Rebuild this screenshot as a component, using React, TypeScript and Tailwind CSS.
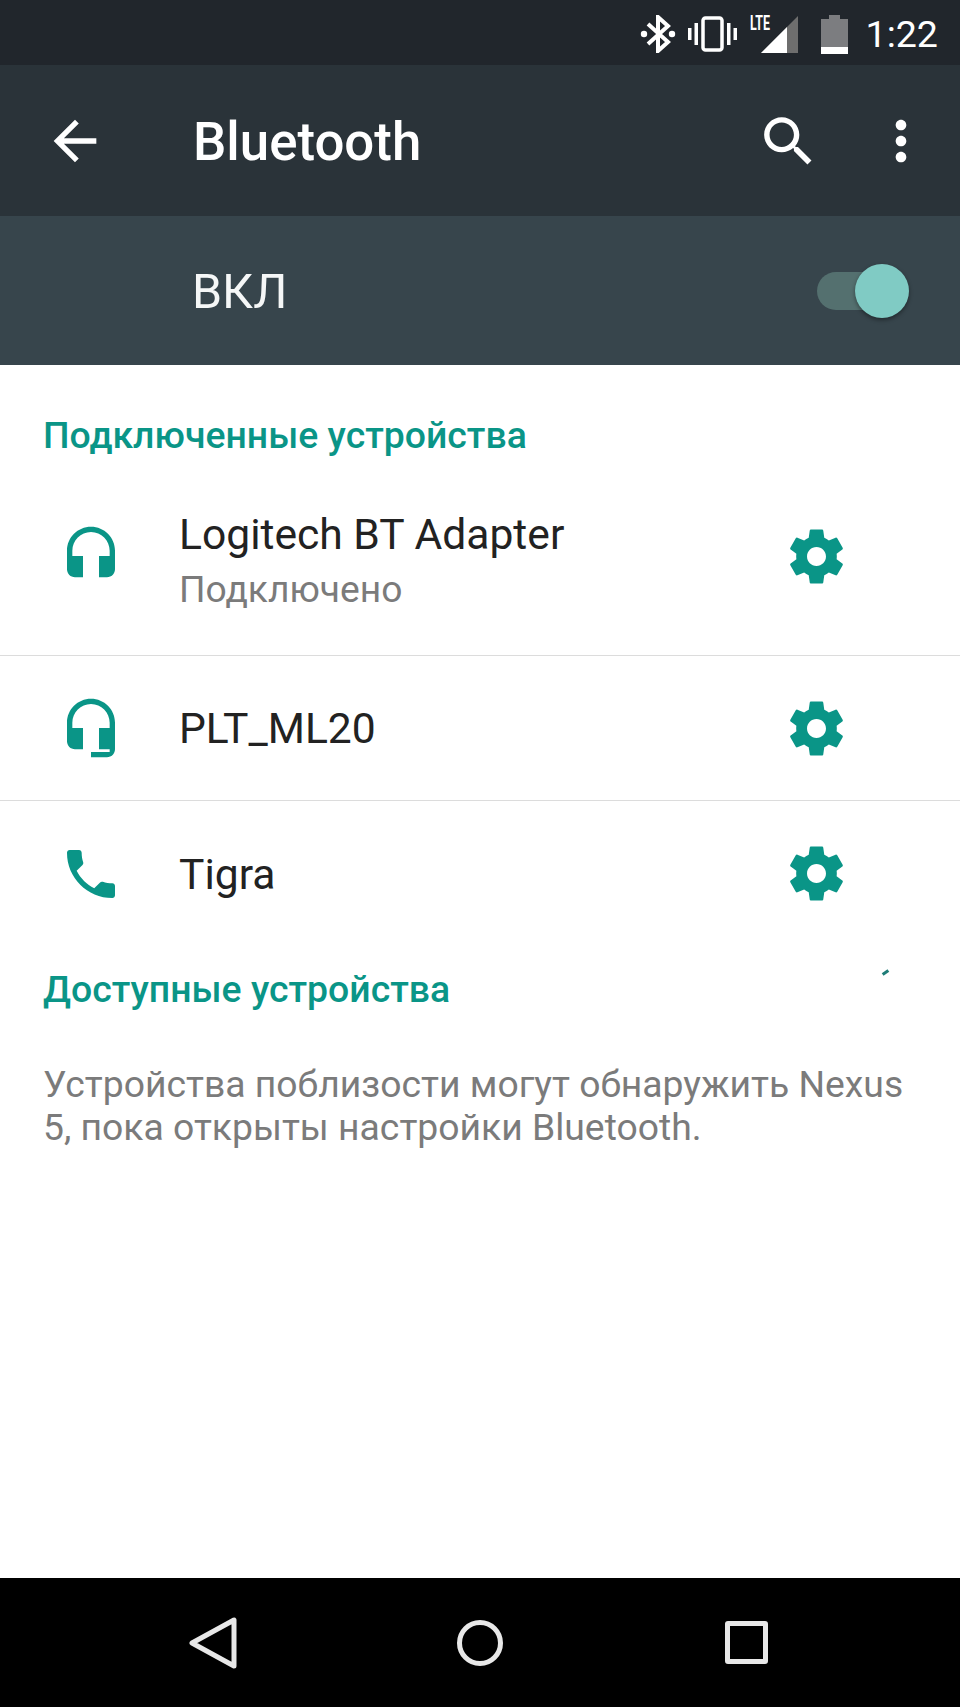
const HEADSET = "M12 1c-4.97 0-9 4.03-9 9v7c0 1.66 1.34 3 3 3h3v-8H5v-2c0-3.87 3.13-7 7-7s7 3.13 7 7v2h-4v8h3c1.66 0 3-1.34 3-3v-7c0-4.97-4.03-9-9-9z";
const HEADSET_MIC = "M12 1c-4.97 0-9 4.03-9 9v7c0 1.66 1.34 3 3 3h3v-8H5v-2c0-3.87 3.13-7 7-7s7 3.13 7 7v2h-4v8h4v1h-7v2h6c1.66 0 3-1.34 3-3V10c0-4.97-4.03-9-9-9z";
const PHONE = "M6.62 10.79c1.44 2.83 3.76 5.14 6.59 6.59l2.2-2.2c.27-.27.67-.36 1.02-.24 1.12.37 2.33.57 3.57.57.55 0 1 .45 1 1V20c0 .55-.45 1-1 1-9.39 0-17-7.61-17-17 0-.55.45-1 1-1h3.5c.55 0 1 .45 1 1 0 1.25.2 2.45.57 3.57.11.35.03.74-.25 1.02l-2.2 2.2z";
const GEAR = "M19.43 12.98c.04-.32.07-.64.07-.98s-.03-.66-.07-.98l2.11-1.65c.19-.15.24-.42.12-.64l-2-3.46c-.12-.22-.39-.3-.61-.22l-2.49 1c-.52-.4-1.08-.73-1.69-.98l-.38-2.65C14.46 2.18 14.25 2 14 2h-4c-.25 0-.46.18-.49.42l-.38 2.65c-.61.25-1.17.59-1.69.98l-2.49-1c-.23-.09-.49 0-.61.22l-2 3.46c-.13.22-.07.49.12.64l2.11 1.65c-.04.32-.07.65-.07.98s.03.66.07.98l-2.11 1.65c-.19.15-.24.42-.12.64l2 3.46c.12.22.39.3.61.22l2.49-1c.52.4 1.08.73 1.69.98l.38 2.65c.03.24.24.42.49.42h4c.25 0 .46-.18.49-.42l.38-2.65c.61-.25 1.17-.59 1.69-.98l2.49 1c.23.09.49 0 .61-.22l2-3.46c.12-.22.07-.49-.12-.64l-2.11-1.65zM12 15.5c-1.93 0-3.5-1.57-3.5-3.5s1.57-3.5 3.5-3.5 3.5 1.57 3.5 3.5-1.57 3.5-3.5 3.5z";

function Icon({ d, className }: { d: string; className: string }) {
  return (
    <svg viewBox="0 0 24 24" fill="currentColor" className={className}>
      <path d={d} />
    </svg>
  );
}

function Row({ icon, title, sub, divider, rowClass }: { icon: string; title: string; sub?: string; divider?: boolean; rowClass: string }) {
  return (
    <div className={`flex items-center pl-[59px] pr-[111px] ${rowClass} ${divider ? "border-b border-[#dcdcdc]" : ""}`}>
      <Icon d={icon} className="w-[64px] h-[64px] text-[#0a9587] shrink-0" />
      <div className={`ml-[56px] flex-1 min-w-0 ${sub ? "mt-[10px]" : ""}`}>
        <div className="text-[42.6px] leading-[50px] text-[#222222]">{title}</div>
        {sub && <div className="mt-[6px] text-[37.2px] leading-[48px] text-[#7b7b7b]">{sub}</div>}
      </div>
      <Icon d={GEAR} className="w-[65px] h-[65px] text-[#0a9587] shrink-0" />
    </div>
  );
}

export default function App() {
  return (
    <div className="w-[960px] h-[1707px] flex flex-col bg-white overflow-hidden font-['Roboto',sans-serif]">
      {/* status bar */}
      <div className="h-[65px] bg-[#21262c] flex items-center justify-end pr-[22px] text-white shrink-0">
        <svg viewBox="0 0 36 38" className="w-[36px] h-[38px] mb-[-3px]" fill="none" stroke="white">
          <path d="M8 9 L28 27 L18 36 V2 L28 11 L8 29" strokeWidth="4" />
          <circle cx="4" cy="19" r="3.2" fill="white" stroke="none" />
          <circle cx="32" cy="19" r="3.2" fill="white" stroke="none" />
        </svg>
        <svg viewBox="0 0 49 36" className="w-[49px] h-[36px] ml-[12px] mb-[-3px]" fill="white">
          <rect x="0" y="12" width="3.5" height="12" />
          <rect x="6.5" y="7" width="3.5" height="22" />
          <rect x="15" y="2" width="19" height="32" rx="2.5" fill="none" stroke="white" strokeWidth="3.5" />
          <rect x="39" y="7" width="3.5" height="22" />
          <rect x="45.5" y="12" width="3.5" height="12" />
        </svg>
        <div className="relative w-[49px] h-[38px] ml-[13px] mb-[-3px]">
          <svg viewBox="0 0 49 38" className="w-[49px] h-[38px]">
            <polygon points="11,38 48,1 48,38" fill="#6e6e6e" />
            <polygon points="11,38 37,12 37,38" fill="white" />
          </svg>
          <span className="absolute left-0 top-[-2px] text-[20px] leading-[20px] font-bold text-white font-['Roboto',sans-serif] scale-x-[0.62] origin-left">LTE</span>
        </div>
        <svg viewBox="0 0 27 39" className="w-[27px] h-[39px] ml-[22px] mb-[-3px]">
          <path d="M8 0 H19 V4 H27 V39 H0 V4 H8 Z" fill="#7c7d80" />
          <rect x="0" y="32" width="27" height="7" fill="white" />
        </svg>
        <span className="ml-[18px] text-[37.6px] leading-none mb-[-4px]">1:22</span>
      </div>

      {/* app bar */}
      <div className="h-[151px] bg-[#2a3339] flex items-center pl-[43px] pr-[27px] text-white shrink-0">
        <Icon d="M20 11H7.83l5.59-5.59L12 4l-8 8 8 8 1.41-1.41L7.83 13H20v-2z" className="w-[64px] h-[64px] shrink-0 mt-[1px]" />
        <div className="ml-[86px] flex-1 text-[52.8px] leading-none font-medium mt-[4px]">Bluetooth</div>
        <Icon d="M15.5 14h-.79l-.28-.27C15.41 12.59 16 11.11 16 9.5 16 5.91 13.09 3 9.5 3S3 5.91 3 9.5 5.91 16 9.5 16c1.61 0 3.09-.59 4.23-1.57l.27.28v.79l5 4.99L20.49 19l-4.99-5zm-6 0C7.01 14 5 11.99 5 9.5S7.01 5 9.5 5 14 7.01 14 9.5 11.99 14 9.5 14z" className="w-[65px] h-[65px] shrink-0 mt-[1px]" />
        <Icon d="M12 8c1.1 0 2-.9 2-2s-.9-2-2-2-2 .9-2 2 .9 2 2 2zm0 2c-1.1 0-2 .9-2 2s.9 2 2 2 2-.9 2-2-.9-2-2-2zm0 6c-1.1 0-2 .9-2 2s.9 2 2 2 2-.9 2-2-.9-2-2-2z" className="w-[64px] h-[64px] shrink-0 ml-[48px] mt-[1px]" />
      </div>

      {/* switch row */}
      <div className="h-[149px] bg-[#37454c] flex items-center pl-[192px] pr-[56px] shrink-0">
        <div className="flex-1 text-[48.3px] leading-none text-[#f5f7f7] mt-[4px]">ВКЛ</div>
        <div className="relative w-[90px] h-[38px] rounded-full bg-[#54706f] mr-[-3px]">
          <div className="absolute right-[-2px] top-[-8px] w-[54px] h-[54px] rounded-full bg-[#80cbc4] shadow-[0_2px_4px_rgba(0,0,0,0.4)]" />
        </div>
      </div>

      {/* content */}
      <div className="flex-1 bg-white flex flex-col min-h-0">
        <div className="h-[96px] pl-[43px] pt-[47px] text-[37.4px] leading-[46px] font-medium text-[#0a9587]">Подключенные устройства</div>
        <Row icon={HEADSET} title="Logitech BT Adapter" sub="Подключено" divider rowClass="h-[195px] pb-[4px]" />
        <Row icon={HEADSET_MIC} title="PLT_ML20" divider rowClass="h-[145px]" />
        <Row icon={PHONE} title="Tigra" rowClass="h-[145px]" />
        <div className="relative h-[90px] pl-[43px] pt-[20px] text-[37.4px] leading-[46px] font-medium text-[#0a9587]">
          Доступные устройства
          <div className="absolute left-[882px] top-[25px] w-[7px] h-[3px] bg-[#1f7d78] rotate-[-35deg]" />
        </div>
        <div className="pl-[43px] pr-[40px] pt-[27px] text-[37.3px] leading-[43px] text-[#7b7b7b]">
          Устройства поблизости могут обнаружить Nexus 5, пока открыты настройки Bluetooth.
        </div>
      </div>

      {/* nav bar */}
      <div className="h-[129px] bg-black flex items-center justify-center shrink-0">
        <div className="w-[267px] flex justify-center">
          <svg viewBox="0 0 50 52" className="w-[50px] h-[52px]" fill="none" stroke="#e8e8e8" strokeWidth="5" strokeLinejoin="round">
            <path d="M46 3 V49 L4 26 Z" />
          </svg>
        </div>
        <div className="w-[267px] flex justify-center">
          <div className="w-[46px] h-[46px] rounded-full border-[5px] border-[#e8e8e8]" />
        </div>
        <div className="w-[267px] flex justify-center">
          <div className="w-[43px] h-[43px] rounded-[3px] border-[5px] border-[#e8e8e8] ml-[-1px]" />
        </div>
      </div>
    </div>
  );
}
